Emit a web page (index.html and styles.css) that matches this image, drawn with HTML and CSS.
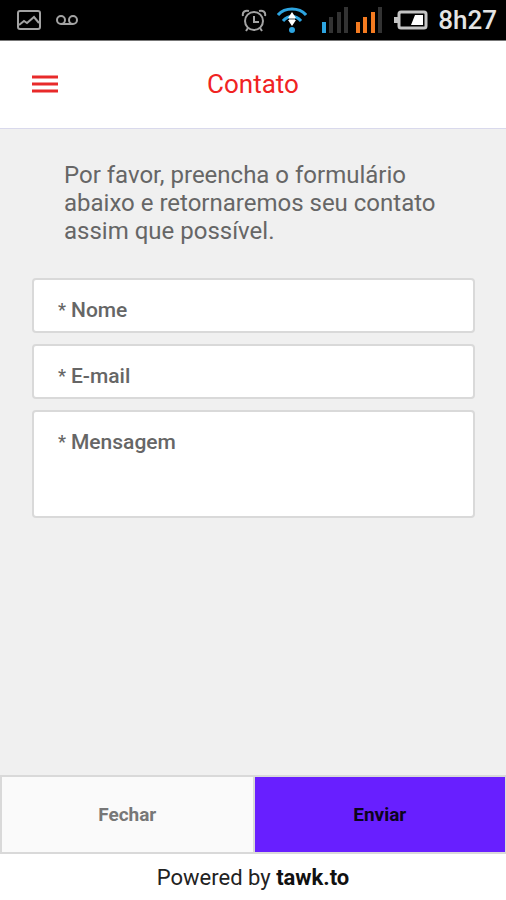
FILE: index.html
```html
<!DOCTYPE html>
<html lang="pt-BR">
<head>
  <meta charset="UTF-8" />
  <meta name="viewport" content="width=device-width, initial-scale=1.0"/>
  <title>Contato</title>
  <link rel="stylesheet" href="styles.css">
</head>
<body>
  <div class="status-bar">
    <div class="status-left">
      <!-- screenshot -->
      <svg width="24" height="20" viewBox="0 0 24 20" fill="none" stroke="#a3a3a3" stroke-width="2">
        <rect x="1" y="1" width="22" height="18" rx="2"/>
        <path d="M2 15l5-4 3 2 7-6 5 6"/>
      </svg>
      <!-- voicemail -->
      <svg width="22" height="12" viewBox="0 0 22 12" fill="none" stroke="#a3a3a3" stroke-width="2">
        <circle cx="5" cy="6" r="4"/>
        <circle cx="17" cy="6" r="4"/>
        <path d="M5 10h12"/>
      </svg>
    </div>
    <div class="status-right">
      <!-- alarm -->
      <svg width="26" height="24" viewBox="0 0 26 24" fill="none" stroke="#a3a3a3" stroke-width="2">
        <circle cx="13" cy="13" r="9"/>
        <path d="M13 8v6h5M2 8c-1-4 2-6 6-5M24 8c1-4-2-6-6-5M7 20l-2 3M19 20l2 3"/>
      </svg>
      <!-- wifi -->
      <svg class="wifi" width="30" height="26" viewBox="0 0 30 26" fill="none" stroke="#2da4e0" stroke-width="3">
        <path d="M1 8C8 0 22 0 29 8M6 14C11 8 19 8 24 14"/>
        <path d="M15 5l4 6h-8zM15 19l4-6h-8z" fill="#fff" stroke="none"/>
        <path d="M12 12h6" stroke="#a3a3a3" stroke-width="2"/>
        <circle cx="15" cy="23" r="3" fill="#2da4e0" stroke="none"/>
      </svg>
      <!-- signal, two SIM cards -->
      <svg class="signal" width="60" height="26" viewBox="0 0 60 26" fill="#333">
        <rect x="0" y="15" width="4" height="11" fill="#2da4e0"/>
        <rect x="7" y="10" width="4" height="16"/>
        <rect x="15" y="5" width="4" height="21"/>
        <rect x="22" y="0" width="4" height="26"/>
        <g fill="#f47b20">
          <rect x="34" y="15" width="4" height="11"/>
          <rect x="41" y="10" width="4" height="16"/>
          <rect x="49" y="5" width="4" height="21"/>
        </g>
        <rect x="56" y="0" width="4" height="26"/>
      </svg>
      <!-- battery -->
      <svg width="34" height="20" viewBox="0 0 34 20">
        <rect x="5" y="2" width="27" height="16" rx="2" fill="none" stroke="#c4c4c4" stroke-width="3"/>
        <path d="M0 7h4v6H0z" fill="#c4c4c4"/>
        <path d="M21 5h8v10H17z" fill="#fff"/>
      </svg>
      <span class="clock">8h27</span>
    </div>
  </div>

  <header class="header">
    <button class="menu" type="button" aria-label="Menu">
      <svg width="26" height="20" viewBox="0 0 26 20" stroke="#e82a2a" stroke-width="3">
        <path d="M0 3h26M0 10h26M0 17h26"/>
      </svg>
    </button>
    <h1>Contato</h1>
  </header>

  <form class="form">
    <div class="content">
      <p class="intro">Por favor, preencha o formulário abaixo e retornaremos seu contato assim que possível.</p>
      <div class="field">
        <label for="nome"><span class="required">*</span>Nome</label>
        <input type="text" id="nome" required>
      </div>
      <div class="field">
        <label for="email"><span class="required">*</span>E-mail</label>
        <input type="email" id="email" required>
      </div>
      <div class="field field-message">
        <label for="mensagem"><span class="required">*</span>Mensagem</label>
        <textarea id="mensagem" required></textarea>
      </div>
    </div>
    <div class="actions">
      <button type="button" class="close">Fechar</button>
      <button type="submit" class="send">Enviar</button>
    </div>
  </form>

  <footer class="footer">Powered by <a href="#">tawk.to</a></footer>
</body>
</html>
```
FILE: styles.css
```css
* {
  box-sizing: border-box;
}

body {
  font-family: Roboto, sans-serif;
  display: flex;
  flex-direction: column;
  min-height: 100vh;
  margin: 0;
  background: #fff;
}

svg {
  display: block;
}

.status-bar {
  display: flex;
  justify-content: space-between;
  align-items: center;
  height: 41px;
  padding: 0 9px 0 17px;
  background: #000;
  border-bottom: 1px solid #777;
}

.status-left,
.status-right {
  display: flex;
  align-items: center;
}

.status-left {
  gap: 15px;
}

.wifi {
  margin-left: 10px;
}

.signal {
  margin: 0 12px 0 15px;
}

.clock {
  margin-left: 10px;
  font-size: 26px;
  font-weight: 500;
  color: #e4e4e4;
}

.header {
  display: grid;
  grid-template-columns: 26px 1fr 26px;
  align-items: center;
  height: 88px;
  padding: 0 32px 2px;
  border-bottom: 1px solid #d9d9ec;
}

.menu {
  padding: 0;
  border: none;
  background: none;
  cursor: pointer;
}

h1 {
  margin: 0;
  font-size: 26px;
  font-weight: 400;
  text-align: center;
  color: #f02323;
}

.form {
  display: flex;
  flex-direction: column;
  flex: 1;
  background: #f0f0f0;
}

.content {
  display: flex;
  flex-direction: column;
  flex: 1;
  gap: 11px;
  padding: 32px 31px 32px 32px;
}

.intro {
  margin: 0 32px 22px;
  font-size: 24px;
  line-height: 28px;
  color: #666;
}

.field {
  display: flex;
  height: 55px;
  padding: 17px 24px 10px;
  background: #fff;
  border: 2px solid #d9d9d9;
  border-radius: 4px;
}

.field-message {
  height: 108px;
}

.field label {
  display: flex;
  gap: 5px;
  font-size: 21px;
  line-height: 26px;
  font-weight: 500;
  color: #666;
}

.required {
  font-size: 18px;
}

.field input,
.field textarea {
  flex: 1;
  min-width: 0;
  padding: 0 0 0 8px;
  border: none;
  outline: none;
  resize: none;
  background: none;
  font: inherit;
  font-size: 21px;
}

.actions {
  display: flex;
  border: 2px solid #d9d9d9;
  border-right-width: 1px;
}

.actions button {
  flex: 1;
  height: 75px;
  padding: 0;
  border: none;
  font-family: inherit;
  font-size: 19px;
  font-weight: 700;
  cursor: pointer;
}

.actions .close {
  background: #fafafa;
  border-right: 2px solid #d9d9d9;
  color: #777;
}

.actions .send {
  background: #681fff;
  color: #0c0420;
}

.footer {
  height: 46px;
  font-size: 22px;
  line-height: 48px;
  text-align: center;
  color: #222;
}

.footer a {
  font-weight: 700;
  color: #111;
  text-decoration: none;
}
```
